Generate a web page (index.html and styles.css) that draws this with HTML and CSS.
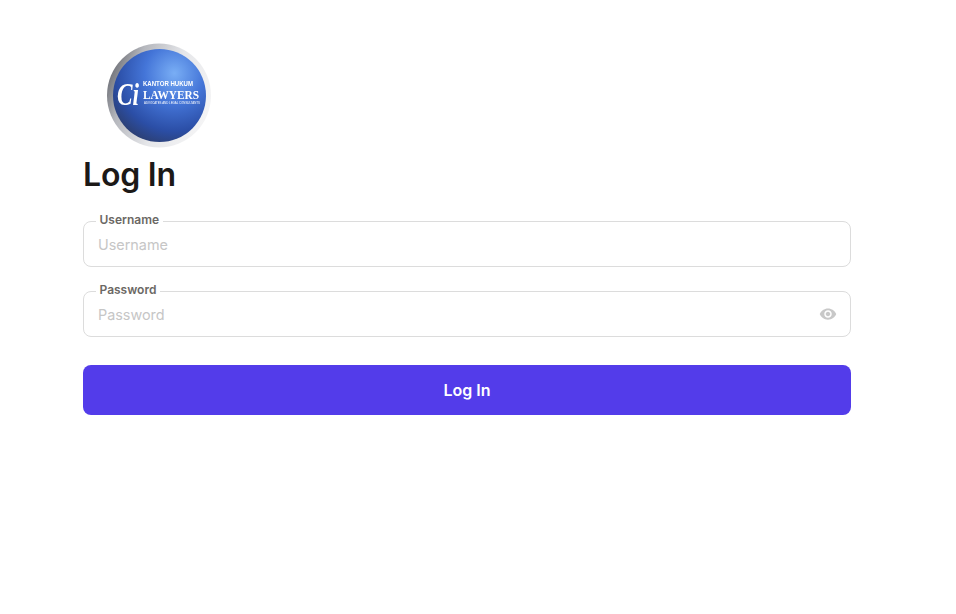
FILE: index.html
```html
<!DOCTYPE html>
<html>

	<head>
		<meta charset="UTF-8">
		<title>Log In</title>
		<link rel="stylesheet" href="styles.css">
	</head>

	<body>
		<div class="login">
			<svg class="logo" width="104" height="105" viewBox="0 0 104 105">
				<defs>
					<linearGradient id="ring" x1="0" y1="0.2" x2="1" y2="0.6">
						<stop offset="0" stop-color="#5f6168" />
						<stop offset="0.25" stop-color="#b5b7bd" />
						<stop offset="0.6" stop-color="#e6e7ea" />
						<stop offset="1" stop-color="#f4f4f5" />
					</linearGradient>
					<radialGradient id="face" cx="0.66" cy="0.26" r="0.8">
						<stop offset="0" stop-color="#79aef5" />
						<stop offset="0.4" stop-color="#4475d8" />
						<stop offset="0.78" stop-color="#2b4ea6" />
						<stop offset="1" stop-color="#2c3f72" />
					</radialGradient>
				</defs>
				<circle cx="52" cy="52.5" r="52" fill="url(#ring)" />
				<circle cx="52.5" cy="52.5" r="46.5" fill="url(#face)" />
				<text class="logo-top" x="36" y="43" textLength="50" lengthAdjust="spacingAndGlyphs">KANTOR HUKUM</text>
				<text class="logo-ci" x="10" y="62" textLength="22" lengthAdjust="spacingAndGlyphs">Ci</text>
				<text class="logo-name" x="36" y="55.5" textLength="56" lengthAdjust="spacingAndGlyphs">LAWYERS</text>
				<text class="logo-sub" x="37" y="61" textLength="56" lengthAdjust="spacingAndGlyphs">ADVOCATES AND LEGAL CONSULTANTS</text>
			</svg>
			<h1>Log In</h1>
			<form class="login-form">
				<fieldset class="field">
					<legend>Username</legend>
					<input type="text" placeholder="Username">
				</fieldset>
				<fieldset class="field">
					<legend>Password</legend>
					<input type="password" placeholder="Password">
					<svg class="eye" width="18" height="18" viewBox="0 0 24 24">
						<path d="M12 4.5C7 4.5 2.73 7.61 1 12c1.73 4.39 6 7.5 11 7.5s9.27-3.11 11-7.5c-1.73-4.39-6-7.5-11-7.5zM12 17c-2.76 0-5-2.24-5-5s2.24-5 5-5 5 2.24 5 5-2.24 5-5 5zm0-8c-1.66 0-3 1.34-3 3s1.34 3 3 3 3-1.34 3-3-1.34-3-3-3z" />
					</svg>
				</fieldset>
				<button type="button" class="submit">Log In</button>
			</form>
		</div>
	</body>

</html>
```
FILE: styles.css
```css
body {
	margin: 0;
	background-color: #fff;
	font-family: Inter, "Noto Sans", sans-serif;
}

.login {
	width: 768px;
	padding: 43px 0 0 83px;
}

.logo {
	display: block;
	margin-left: 24px;
	filter: blur(0.3px);
}

.logo text {
	fill: #fff;
}

.logo-top {
	font-size: 7px;
	font-weight: bold;
	font-family: "Liberation Sans", sans-serif;
}

.logo-ci {
	font-size: 32px;
	font-weight: bold;
	font-style: italic;
	font-family: "Liberation Serif", serif;
}

.logo-name {
	font-size: 12px;
	font-weight: bold;
	font-family: "Liberation Serif", serif;
}

.logo-sub {
	font-size: 3px;
	font-family: "Liberation Sans", sans-serif;
}

h1 {
	margin: 7px 0 0;
	font-size: 32px;
	line-height: 40px;
	font-weight: 600;
	letter-spacing: -0.2px;
	color: #1c1917;
}

.login-form {
	display: flex;
	flex-direction: column;
	margin-top: 18px;
}

.field {
	display: flex;
	align-items: center;
	height: 54px;
	box-sizing: border-box;
	margin: 0 0 16px;
	padding: 4px 14px 0;
	border: 1px solid #dcdcdc;
	border-radius: 8px;
}

.field legend {
	margin-left: -2.5px;
	padding: 0 4px 4px;
	font-size: 12px;
	line-height: 13px;
	font-weight: 600;
	color: #6b6864;
}

.field input {
	flex: 1;
	min-width: 0;
	height: 20px;
	padding: 0;
	border: 0;
	outline: 0;
	background: none;
	font-family: inherit;
	font-size: 14.4px;
	color: #1c1917;
}

.field input::placeholder {
	color: #c6c6c6;
	opacity: 1;
}

.eye {
	margin-right: -1px;
	fill: #c8c8c8;
}

.submit {
	height: 50px;
	margin-top: 12px;
	border: 0;
	border-radius: 8px;
	background-color: #533cea;
	font-family: inherit;
	font-size: 16px;
	font-weight: 600;
	color: #fff;
}
```
